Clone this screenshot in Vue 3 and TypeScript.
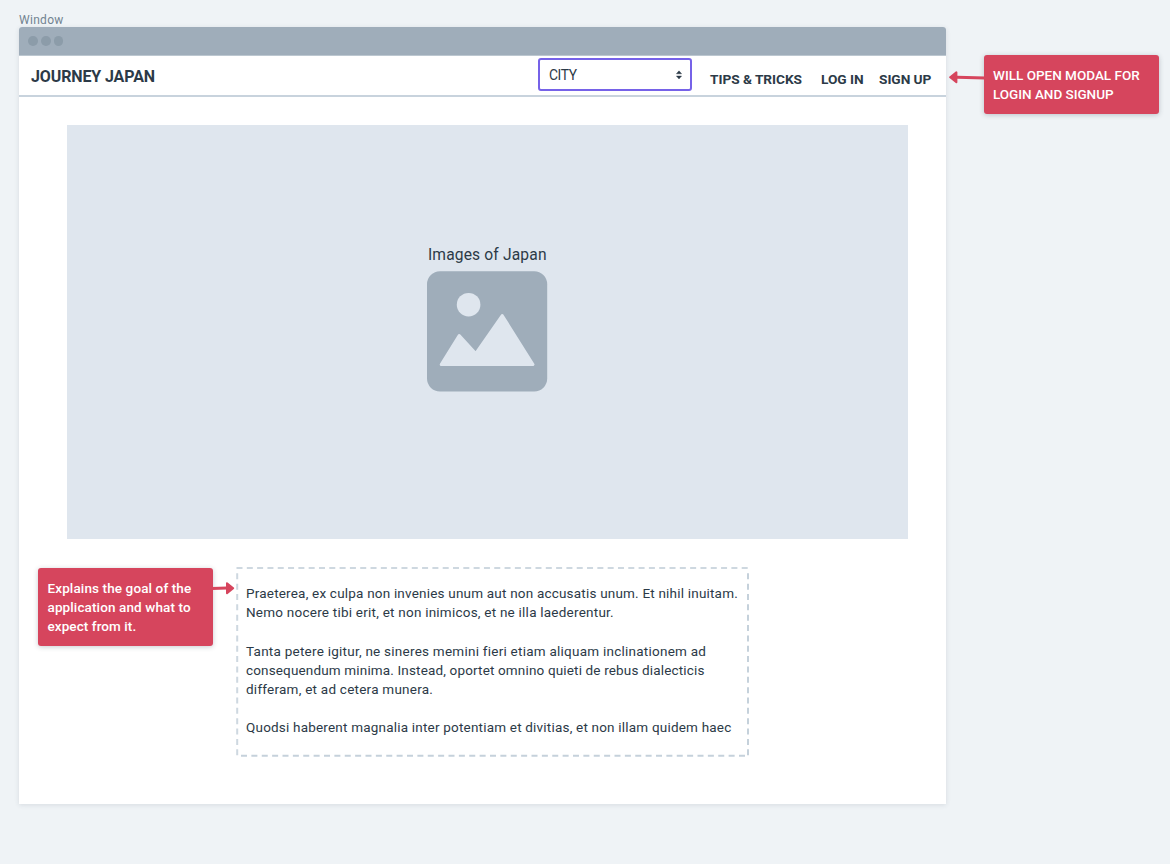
<script setup lang="ts">
interface Line { text: string; spacing: number }

const dots = [0, 1, 2]
const links: string[] = ['TIPS & TRICKS', 'LOG IN', 'SIGN UP']
const loginNote: Line[] = [
  { text: 'WILL OPEN MODAL FOR', spacing: 0 },
  { text: 'LOGIN AND SIGNUP', spacing: -0.03 },
]
const goalNote: Line[] = [
  { text: 'Explains the goal of the', spacing: 0.12 },
  { text: 'application and what to', spacing: 0.12 },
  { text: 'expect from it.', spacing: 0.08 },
]
const paragraphs: Line[][] = [
  [
    { text: 'Praeterea, ex culpa non invenies unum aut non accusatis unum. Et nihil inuitam.', spacing: 0.2 },
    { text: 'Nemo nocere tibi erit, et non inimicos, et ne illa laederentur.', spacing: 0.23 },
  ],
  [
    { text: 'Tanta petere igitur, ne sineres memini fieri etiam aliquam inclinationem ad', spacing: 0.245 },
    { text: 'consequendum minima. Instead, oportet omnino quieti de rebus dialecticis', spacing: 0.155 },
    { text: 'differam, et ad cetera munera.', spacing: 0.24 },
  ],
  [{ text: 'Quodsi haberent magnalia inter potentiam et divitias, et non illam quidem haec', spacing: 0.2 }],
]
const track = (line: Line) => ({ letterSpacing: `${line.spacing}px` })
</script>

<template>
  <div class="canvas">
    <div class="caption"><span>Window</span></div>
    <main class="window">
      <div class="titlebar"><i v-for="d in dots" :key="d" class="dot"></i></div>
      <header class="nav">
        <h1 class="brand">JOURNEY JAPAN</h1>
        <div class="select">
          <span>CITY</span>
          <svg width="8" height="10" viewBox="0 0 8 10">
            <path d="M4 .8 6.6 3.8H1.4ZM4 9 1.4 6h5.2Z" fill="#2c3a47" stroke="#2c3a47" stroke-width=".4" stroke-linejoin="round" />
          </svg>
        </div>
        <nav class="links">
          <a v-for="l in links" :key="l">{{ l }}</a>
        </nav>
      </header>
      <section class="hero">
        <p class="hero-title">Images of Japan</p>
        <svg class="picture" width="121" height="121" viewBox="0 0 121 121">
          <rect x="0" y=".2" width="120.2" height="120.4" rx="13" fill="#9fadba" />
          <circle cx="41.6" cy="33.7" r="11.8" fill="#dfe6ee" />
          <path d="M14.2 93.5 32.2 64.5 48.7 82.5 75.2 44.5 106 93.5Z" fill="#dfe6ee" stroke="#dfe6ee" stroke-width="3" stroke-linejoin="round" />
        </svg>
      </section>
      <section class="copy">
        <svg class="outline" width="513" height="190" viewBox="0 0 513 190" fill="none" stroke-width="2">
          <path d="M.5 1H513" stroke="#ced8e0" stroke-dasharray="6 4.31" />
          <path d="M5 188.7H513" stroke="#c5d1db" stroke-dasharray="6 4.375" />
          <path d="M1.2 6.3V189.5" stroke="#ced8e0" stroke-dasharray="6 4.35" />
          <path d="M512 6.3V189.5" stroke="#c5d1db" stroke-dasharray="6 4.35" />
        </svg>
        <p v-for="(p, i) in paragraphs" :key="i">
          <span v-for="l in p" :key="l.text" class="line" :style="track(l)">{{ l.text }}</span>
        </p>
      </section>
    </main>
    <aside class="note note-login">
      <span v-for="l in loginNote" :key="l.text" class="line" :style="track(l)">{{ l.text }}</span>
      <svg class="arrow" width="36" height="14" viewBox="0 0 36 14">
        <path d="M8 7.3 36 7.9" stroke="#d6455d" stroke-width="3" />
        <path d="M1.2 7.2 7.4 2.3V12.3Z" fill="#d6455d" stroke="#d6455d" stroke-width="2" stroke-linejoin="round" />
      </svg>
    </aside>
    <aside class="note note-goal">
      <span v-for="l in goalNote" :key="l.text" class="line" :style="track(l)">{{ l.text }}</span>
      <svg class="arrow" width="23" height="14" viewBox="0 0 23 14">
        <path d="M0 7.5 15 7.1" stroke="#d6455d" stroke-width="3" />
        <path d="M21.2 7.2 15 2.2V12.2Z" fill="#d6455d" stroke="#d6455d" stroke-width="2" stroke-linejoin="round" />
      </svg>
    </aside>
  </div>
</template>

<style>
body { background: #eff3f6; }
</style>

<style scoped>
.canvas {
  position: relative;
  box-sizing: border-box;
  width: 1170px;
  height: 864px;
  padding: 13px 0 0 19px;
  overflow: hidden;
  background: #eff3f6;
  color: #2c3a47;
  font-family: Roboto, "Liberation Sans", sans-serif;
}
.caption { height: 14px; font-size: 12px; line-height: 15px; color: #728391; letter-spacing: .3px; }
.window {
  width: 926.6px;
  height: 777px;
  overflow: hidden;
  border-radius: 3px 3px 0 0;
  background: #fff;
  box-shadow: 0 1px 5px rgba(40, 55, 70, .12);
}
.titlebar {
  box-sizing: border-box;
  display: flex;
  align-items: center;
  gap: 3px;
  height: 29px;
  padding-left: 9px;
  background: #9fadba;
  border-bottom: 1px solid #bcc7d0;
}
.dot { width: 9.8px; height: 9.8px; border-radius: 50%; background: #8c9ca9; }
.nav {
  box-sizing: border-box;
  display: flex;
  height: 41px;
  padding-left: 12px;
  border-bottom: 2px solid #c8d3dd;
}
.brand { width: 507px; margin: 0; font-size: 16px; line-height: 41px; font-weight: 700; letter-spacing: -.12px; white-space: nowrap; }
.select {
  box-sizing: border-box;
  display: flex;
  align-items: center;
  justify-content: space-between;
  width: 154px;
  height: 33px;
  margin-top: 2px;
  padding: 0 7.5px 0 9px;
  border: 2px solid #7662e8;
  border-radius: 3px;
  font-size: 13.8px;
  letter-spacing: -.4px;
}
.links { display: flex; padding-left: 18px; font-size: 13.7px; line-height: 46px; font-weight: 700; letter-spacing: -.04px; white-space: nowrap; }
.links a { width: 111px; }
.links a + a { width: 58px; }
.hero {
  box-sizing: border-box;
  display: flex;
  flex-direction: column;
  align-items: center;
  width: 840.6px;
  height: 414px;
  margin: 28px 0 0 48px;
  padding-top: 120px;
  background: #dfe6ee;
}
.hero-title { margin: 0 0 6px; font-size: 15.6px; line-height: 20px; letter-spacing: .15px; }
.copy {
  position: relative;
  box-sizing: border-box;
  width: 513px;
  height: 190px;
  margin: 28px 0 0 217px;
  padding: 17px 10px;
  font-size: 13.5px;
  line-height: 19px;
}
.outline { position: absolute; inset: 0; }
.copy p { margin: 0 0 19.5px; }
.line { display: block; width: max-content; white-space: nowrap; }
.note {
  position: absolute;
  box-sizing: border-box;
  width: 175px;
  padding: 11px 9px;
  border-radius: 3px;
  background: #d6455d;
  box-shadow: 0 1px 5px rgba(40, 55, 70, .25);
  color: #fff;
  font-size: 13.5px;
  line-height: 19px;
  font-weight: 500;
}
.note-login { left: 984px; top: 55px; height: 59px; }
.note-goal { left: 38px; top: 568px; height: 78px; padding-left: 9.5px; }
.arrow { position: absolute; }
.note-login .arrow { right: 174px; top: 15px; }
.note-goal .arrow { left: 174px; top: 13px; }
</style>
